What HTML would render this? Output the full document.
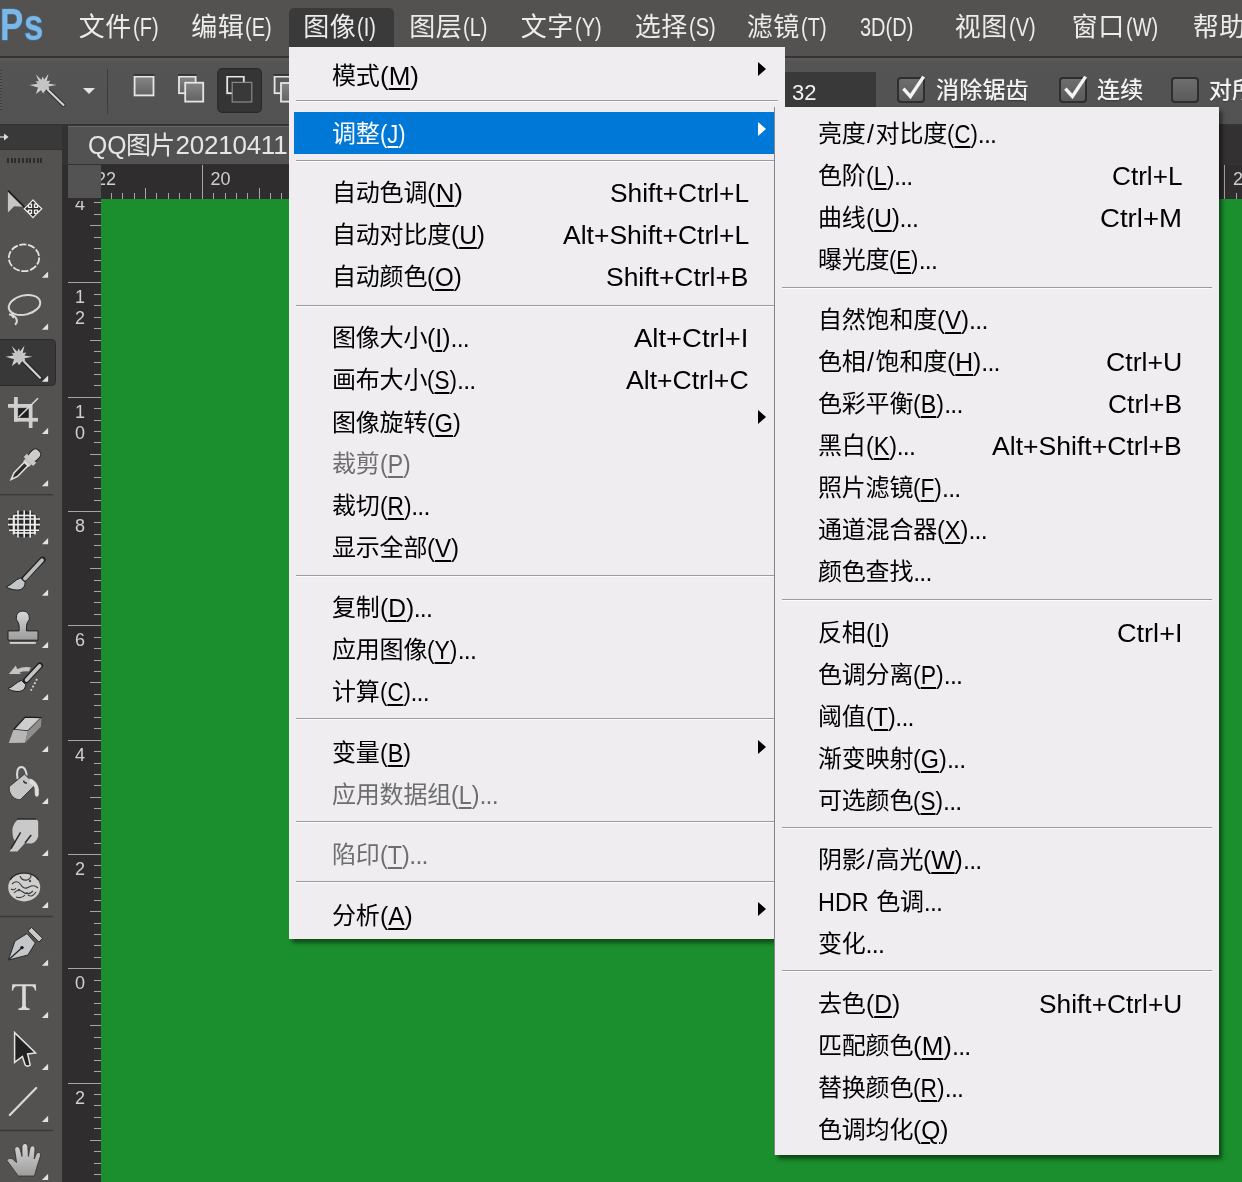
<!DOCTYPE html>
<html lang="zh-CN"><head><meta charset="utf-8"><title>Photoshop - 图像 调整 菜单</title>
<style>
html,body{margin:0;padding:0}
html{width:1242px;height:1182px;overflow:hidden}
body{width:1242px;height:1182px;overflow:hidden;position:relative;background:#535353;font-family:"Liberation Sans",sans-serif;}
.a{position:absolute}
.g{position:absolute;left:0;top:0;width:1242px;height:1182px;overflow:hidden;will-change:transform}
.t{position:absolute;white-space:nowrap;line-height:30px;height:30px}
.c{display:inline-block;vertical-align:top;overflow:visible}
.k{display:inline-block;vertical-align:top;overflow:visible;white-space:nowrap;font-family:"Liberation Sans","Noto Sans CJK SC",sans-serif}
.mb .k{letter-spacing:.6px}
.mi .k{letter-spacing:-.2px}
.l{display:inline-block;transform-origin:0 50%;vertical-align:top}
.u{text-decoration:underline;text-decoration-thickness:1.5px;text-underline-offset:3px}
.mb{color:#ececec;font-size:26px}
.mi{color:#000;font-size:24px}
.dis{color:#6d6d6d}
.fw{display:inline-block;white-space:nowrap;vertical-align:top;font-size:25px}
.el{font-size:25px;letter-spacing:-.8px}
.sl{font-size:25px;display:inline-block;width:10px;text-align:center}
.sep{position:absolute;height:1px;background:#9b9b9b;box-shadow:0 1px 0 #fbfbfb}
.tick{position:absolute;background:#a6a6a6}
.rn{position:absolute;color:#d0d0d0;font-size:18px;line-height:18px;height:18px;white-space:nowrap}
</style></head>
<body>
<!-- menu bar -->
<div class="a" style="left:0;top:0;width:1242px;height:56px;background:#535250"></div>
<div class="a" style="left:0;top:56px;width:1242px;height:2px;background:#343434"></div>
<!-- options bar -->
<div class="a" style="left:0;top:58px;width:1242px;height:66px;background:linear-gradient(#5c5c5c 0,#545454 4px,#525252 100%)"></div>
<div class="a" style="left:0;top:124px;width:1242px;height:2px;background:#343434"></div>
<!-- document area background -->
<div class="a" style="left:0;top:126px;width:1242px;height:1056px;background:#333131"></div>
<!-- tool panel -->
<div class="a" style="left:0;top:126px;width:62px;height:23px;background:#3a3939"></div>
<div class="a" style="left:0;top:150px;width:62px;height:1032px;background:#545251"></div>
<!-- document tab -->
<div class="a" style="left:68px;top:126px;width:700px;height:37px;background:#535252;border-top:1px solid #6a6a6a"></div>
<!-- rulers -->
<div class="a" style="left:62px;top:165px;width:1180px;height:34px;background:#2f2d2d"></div>
<div class="a" style="left:62px;top:165px;width:39px;height:1017px;background:#2f2d2d"></div>
<div class="a" style="left:68px;top:165px;width:33px;height:33px;background:#545353"></div>
<!-- canvas -->
<div class="a" style="left:101px;top:199px;width:1141px;height:983px;background:#1b8e2d"></div>
<div class="g">
<!-- horizontal ruler -->
<div class="tick" style="left:110.9px;top:193px;width:1px;height:6px"></div>
<div class="tick" style="left:122.3px;top:193px;width:1px;height:6px"></div>
<div class="tick" style="left:133.6px;top:193px;width:1px;height:6px"></div>
<div class="tick" style="left:145.0px;top:188px;width:1px;height:11px"></div>
<div class="tick" style="left:156.4px;top:193px;width:1px;height:6px"></div>
<div class="tick" style="left:167.7px;top:193px;width:1px;height:6px"></div>
<div class="tick" style="left:179.1px;top:193px;width:1px;height:6px"></div>
<div class="tick" style="left:190.4px;top:193px;width:1px;height:6px"></div>
<div class="tick" style="left:201.8px;top:165px;width:1px;height:34px"></div>
<div class="tick" style="left:213.2px;top:193px;width:1px;height:6px"></div>
<div class="tick" style="left:224.5px;top:193px;width:1px;height:6px"></div>
<div class="tick" style="left:235.9px;top:193px;width:1px;height:6px"></div>
<div class="tick" style="left:247.2px;top:193px;width:1px;height:6px"></div>
<div class="tick" style="left:258.6px;top:188px;width:1px;height:11px"></div>
<div class="tick" style="left:270.0px;top:193px;width:1px;height:6px"></div>
<div class="tick" style="left:281.3px;top:193px;width:1px;height:6px"></div>
<div class="tick" style="left:1224.2px;top:165px;width:1px;height:34px"></div>
<div class="tick" style="left:1235.6px;top:193px;width:1px;height:6px"></div>
<div class="rn" style="left:96px;top:170px;clip-path:inset(0 0 0 5px)">22</div>
<div class="rn" style="left:210.5px;top:170px">20</div>
<div class="rn" style="left:1233px;top:170px">2</div>
<!-- vertical ruler -->
<div class="tick" style="left:94px;top:202.4px;width:7px;height:1px"></div>
<div class="tick" style="left:94px;top:213.8px;width:7px;height:1px"></div>
<div class="tick" style="left:90px;top:225.2px;width:11px;height:1px"></div>
<div class="tick" style="left:94px;top:236.7px;width:7px;height:1px"></div>
<div class="tick" style="left:94px;top:248.1px;width:7px;height:1px"></div>
<div class="tick" style="left:94px;top:259.5px;width:7px;height:1px"></div>
<div class="tick" style="left:94px;top:271.0px;width:7px;height:1px"></div>
<div class="rn" style="left:74px;top:195.1px;width:12px;text-align:center;clip-path:inset(5.9px 0 0 0)">4</div>
<div class="tick" style="left:68px;top:282.4px;width:33px;height:1px"></div>
<div class="tick" style="left:94px;top:293.8px;width:7px;height:1px"></div>
<div class="tick" style="left:94px;top:305.3px;width:7px;height:1px"></div>
<div class="tick" style="left:94px;top:316.7px;width:7px;height:1px"></div>
<div class="tick" style="left:94px;top:328.1px;width:7px;height:1px"></div>
<div class="tick" style="left:90px;top:339.5px;width:11px;height:1px"></div>
<div class="tick" style="left:94px;top:351.0px;width:7px;height:1px"></div>
<div class="tick" style="left:94px;top:362.4px;width:7px;height:1px"></div>
<div class="tick" style="left:94px;top:373.8px;width:7px;height:1px"></div>
<div class="tick" style="left:94px;top:385.3px;width:7px;height:1px"></div>
<div class="rn" style="left:74px;top:288.4px;width:12px;text-align:center">1</div>
<div class="rn" style="left:74px;top:309.4px;width:12px;text-align:center">2</div>
<div class="tick" style="left:68px;top:396.7px;width:33px;height:1px"></div>
<div class="tick" style="left:94px;top:408.1px;width:7px;height:1px"></div>
<div class="tick" style="left:94px;top:419.6px;width:7px;height:1px"></div>
<div class="tick" style="left:94px;top:431.0px;width:7px;height:1px"></div>
<div class="tick" style="left:94px;top:442.4px;width:7px;height:1px"></div>
<div class="tick" style="left:90px;top:453.8px;width:11px;height:1px"></div>
<div class="tick" style="left:94px;top:465.3px;width:7px;height:1px"></div>
<div class="tick" style="left:94px;top:476.7px;width:7px;height:1px"></div>
<div class="tick" style="left:94px;top:488.1px;width:7px;height:1px"></div>
<div class="tick" style="left:94px;top:499.6px;width:7px;height:1px"></div>
<div class="rn" style="left:74px;top:402.7px;width:12px;text-align:center">1</div>
<div class="rn" style="left:74px;top:423.7px;width:12px;text-align:center">0</div>
<div class="tick" style="left:68px;top:511.0px;width:33px;height:1px"></div>
<div class="tick" style="left:94px;top:522.4px;width:7px;height:1px"></div>
<div class="tick" style="left:94px;top:533.9px;width:7px;height:1px"></div>
<div class="tick" style="left:94px;top:545.3px;width:7px;height:1px"></div>
<div class="tick" style="left:94px;top:556.7px;width:7px;height:1px"></div>
<div class="tick" style="left:90px;top:568.1px;width:11px;height:1px"></div>
<div class="tick" style="left:94px;top:579.6px;width:7px;height:1px"></div>
<div class="tick" style="left:94px;top:591.0px;width:7px;height:1px"></div>
<div class="tick" style="left:94px;top:602.4px;width:7px;height:1px"></div>
<div class="tick" style="left:94px;top:613.9px;width:7px;height:1px"></div>
<div class="rn" style="left:74px;top:517.0px;width:12px;text-align:center">8</div>
<div class="tick" style="left:68px;top:625.3px;width:33px;height:1px"></div>
<div class="tick" style="left:94px;top:636.7px;width:7px;height:1px"></div>
<div class="tick" style="left:94px;top:648.2px;width:7px;height:1px"></div>
<div class="tick" style="left:94px;top:659.6px;width:7px;height:1px"></div>
<div class="tick" style="left:94px;top:671.0px;width:7px;height:1px"></div>
<div class="tick" style="left:90px;top:682.4px;width:11px;height:1px"></div>
<div class="tick" style="left:94px;top:693.9px;width:7px;height:1px"></div>
<div class="tick" style="left:94px;top:705.3px;width:7px;height:1px"></div>
<div class="tick" style="left:94px;top:716.7px;width:7px;height:1px"></div>
<div class="tick" style="left:94px;top:728.2px;width:7px;height:1px"></div>
<div class="rn" style="left:74px;top:631.3px;width:12px;text-align:center">6</div>
<div class="tick" style="left:68px;top:739.6px;width:33px;height:1px"></div>
<div class="tick" style="left:94px;top:751.0px;width:7px;height:1px"></div>
<div class="tick" style="left:94px;top:762.5px;width:7px;height:1px"></div>
<div class="tick" style="left:94px;top:773.9px;width:7px;height:1px"></div>
<div class="tick" style="left:94px;top:785.3px;width:7px;height:1px"></div>
<div class="tick" style="left:90px;top:796.8px;width:11px;height:1px"></div>
<div class="tick" style="left:94px;top:808.2px;width:7px;height:1px"></div>
<div class="tick" style="left:94px;top:819.6px;width:7px;height:1px"></div>
<div class="tick" style="left:94px;top:831.0px;width:7px;height:1px"></div>
<div class="tick" style="left:94px;top:842.5px;width:7px;height:1px"></div>
<div class="rn" style="left:74px;top:745.6px;width:12px;text-align:center">4</div>
<div class="tick" style="left:68px;top:853.9px;width:33px;height:1px"></div>
<div class="tick" style="left:94px;top:865.3px;width:7px;height:1px"></div>
<div class="tick" style="left:94px;top:876.8px;width:7px;height:1px"></div>
<div class="tick" style="left:94px;top:888.2px;width:7px;height:1px"></div>
<div class="tick" style="left:94px;top:899.6px;width:7px;height:1px"></div>
<div class="tick" style="left:90px;top:911.0px;width:11px;height:1px"></div>
<div class="tick" style="left:94px;top:922.5px;width:7px;height:1px"></div>
<div class="tick" style="left:94px;top:933.9px;width:7px;height:1px"></div>
<div class="tick" style="left:94px;top:945.3px;width:7px;height:1px"></div>
<div class="tick" style="left:94px;top:956.8px;width:7px;height:1px"></div>
<div class="rn" style="left:74px;top:859.9px;width:12px;text-align:center">2</div>
<div class="tick" style="left:68px;top:968.2px;width:33px;height:1px"></div>
<div class="tick" style="left:94px;top:979.6px;width:7px;height:1px"></div>
<div class="tick" style="left:94px;top:991.1px;width:7px;height:1px"></div>
<div class="tick" style="left:94px;top:1002.5px;width:7px;height:1px"></div>
<div class="tick" style="left:94px;top:1013.9px;width:7px;height:1px"></div>
<div class="tick" style="left:90px;top:1025.4px;width:11px;height:1px"></div>
<div class="tick" style="left:94px;top:1036.8px;width:7px;height:1px"></div>
<div class="tick" style="left:94px;top:1048.2px;width:7px;height:1px"></div>
<div class="tick" style="left:94px;top:1059.6px;width:7px;height:1px"></div>
<div class="tick" style="left:94px;top:1071.1px;width:7px;height:1px"></div>
<div class="rn" style="left:74px;top:974.2px;width:12px;text-align:center">0</div>
<div class="tick" style="left:68px;top:1082.5px;width:33px;height:1px"></div>
<div class="tick" style="left:94px;top:1093.9px;width:7px;height:1px"></div>
<div class="tick" style="left:94px;top:1105.4px;width:7px;height:1px"></div>
<div class="tick" style="left:94px;top:1116.8px;width:7px;height:1px"></div>
<div class="tick" style="left:94px;top:1128.2px;width:7px;height:1px"></div>
<div class="tick" style="left:90px;top:1139.7px;width:11px;height:1px"></div>
<div class="tick" style="left:94px;top:1151.1px;width:7px;height:1px"></div>
<div class="tick" style="left:94px;top:1162.5px;width:7px;height:1px"></div>
<div class="tick" style="left:94px;top:1173.9px;width:7px;height:1px"></div>
<div class="rn" style="left:74px;top:1088.5px;width:12px;text-align:center">2</div>
<!-- menu bar items -->
<div class="a" style="left:289px;top:8px;width:105px;height:48px;background:#3b3a3a;border-radius:5px 5px 0 0"></div>
<svg class="a" style="left:0;top:0" width="60" height="56" viewBox="0 0 60 56"><text transform="translate(0 39.6) scale(.80 1)" font-family="Liberation Sans, sans-serif" font-weight="bold" font-size="43.5" fill="#7db7e6" stroke="#3f6f98" stroke-width="1.6" paint-order="stroke" letter-spacing="1">Ps</text></svg>
<div class="t mb" style="left:78.7px;top:12.0px;"><span class="k" style="width:53.2px">文件</span></div>
<div class="t mb" style="left:132.7px;top:12.0px;font-size:25px"><span class="l" style="transform:scaleX(.80)">(F)</span></div>
<div class="t mb" style="left:191.2px;top:12.0px;"><span class="k" style="width:53.2px">编辑</span></div>
<div class="t mb" style="left:245.2px;top:12.0px;font-size:25px"><span class="l" style="transform:scaleX(.80)">(E)</span></div>
<div class="t mb" style="left:303.2px;top:12.0px;"><span class="k" style="width:53.2px">图像</span></div>
<div class="t mb" style="left:357.2px;top:12.0px;font-size:25px"><span class="l" style="transform:scaleX(.80)">(I)</span></div>
<div class="t mb" style="left:409.2px;top:12.0px;"><span class="k" style="width:53.2px">图层</span></div>
<div class="t mb" style="left:463.2px;top:12.0px;font-size:25px"><span class="l" style="transform:scaleX(.80)">(L)</span></div>
<div class="t mb" style="left:520.7px;top:12.0px;"><span class="k" style="width:53.2px">文字</span></div>
<div class="t mb" style="left:574.7px;top:12.0px;font-size:25px"><span class="l" style="transform:scaleX(.80)">(Y)</span></div>
<div class="t mb" style="left:634.7px;top:12.0px;"><span class="k" style="width:53.2px">选择</span></div>
<div class="t mb" style="left:688.7px;top:12.0px;font-size:25px"><span class="l" style="transform:scaleX(.80)">(S)</span></div>
<div class="t mb" style="left:746.7px;top:12.0px;"><span class="k" style="width:53.2px">滤镜</span></div>
<div class="t mb" style="left:800.7px;top:12.0px;font-size:25px"><span class="l" style="transform:scaleX(.80)">(T)</span></div>
<div class="t mb" style="left:859.7px;top:12.0px;font-size:25px"><span class="l" style="transform:scaleX(.80)">3D(D)</span></div>
<div class="t mb" style="left:954.7px;top:12.0px;"><span class="k" style="width:53.2px">视图</span></div>
<div class="t mb" style="left:1008.7px;top:12.0px;font-size:25px"><span class="l" style="transform:scaleX(.80)">(V)</span></div>
<div class="t mb" style="left:1071.7px;top:12.0px;"><span class="k" style="width:53.2px">窗口</span></div>
<div class="t mb" style="left:1125.7px;top:12.0px;font-size:25px"><span class="l" style="transform:scaleX(.80)">(W)</span></div>
<div class="t mb" style="left:1192.7px;top:12.0px;"><span class="k" style="width:53.2px">帮助</span></div>
<div class="t mb" style="left:1246.7px;top:12.0px;font-size:25px"><span class="l" style="transform:scaleX(.80)">(H)</span></div>
<!-- options bar -->
<div class="a" style="left:0;top:70px;width:2px;height:40px;background:repeating-linear-gradient(#3a3a3a 0,#3a3a3a 1px,#5a5a5a 1px,#5a5a5a 3px)"></div>
<div class="a" style="left:107px;top:69px;width:1px;height:45px;background:#3c3c3c"></div>
<div class="a" style="left:83px;top:88px;width:0;height:0;border-left:6px solid transparent;border-right:6px solid transparent;border-top:6.5px solid #e4e4e4"></div>
<svg class="a" style="left:120px;top:60px" width="180" height="62" viewBox="120 60 180 62"><defs><linearGradient id="bg1" x1="0" y1="0" x2="0" y2="1"><stop offset="0" stop-color="#858585"/><stop offset="1" stop-color="#626262"/></linearGradient></defs><rect x="217.8" y="68.7" width="43.6" height="43.6" rx="4.5" fill="#363535" stroke="#2a2929" stroke-width="1.2"/><g stroke="#e6e6e6" stroke-width="1.8" fill="url(#bg1)"><rect x="134.6" y="76.6" width="18.9" height="18.8"/><rect x="179" y="76.6" width="16.6" height="16.6"/><rect x="185.2" y="82.7" width="18" height="18.9"/><rect x="227.2" y="76.6" width="16.6" height="16.6" fill="none"/><rect x="274.6" y="76.6" width="16.6" height="16.6" fill="#5a5a5a"/><rect x="281" y="83" width="18" height="18.6"/></g><rect x="232.2" y="82.4" width="19.6" height="19.6" fill="#3a3939" stroke="#8a8a8a" stroke-width="1.2"/><g stroke="#2b2a2a" stroke-width="1.3"><path d="M133.6 75h20.8M178 75h18.6M226.2 75h18.6M273.6 75h18.6"/></g></svg>
<div class="a" style="left:782px;top:72px;width:94px;height:40px;background:#3a3939"></div>
<div class="t " style="left:792.0px;top:77.5px;color:#f2f2f2;font-size:22px">32</div>
<div class="a" style="left:897px;top:77px;width:28px;height:26px;box-sizing:border-box;border:2px solid #2e2e2e;border-radius:4px;background:linear-gradient(#6e6e6e,#5a5a5a)"></div>
<svg class="a" style="left:896px;top:70px" width="36" height="34" viewBox="0 0 36 34"><path d="M7.4 18.6 L14.4 26.4 L27.6 6.6" fill="none" stroke="#f4f4f4" stroke-width="3.4" stroke-linejoin="miter"/></svg>
<div class="a" style="left:1059px;top:77px;width:28px;height:26px;box-sizing:border-box;border:2px solid #2e2e2e;border-radius:4px;background:linear-gradient(#6e6e6e,#5a5a5a)"></div>
<svg class="a" style="left:1058px;top:70px" width="36" height="34" viewBox="0 0 36 34"><path d="M7.4 18.6 L14.4 26.4 L27.6 6.6" fill="none" stroke="#f4f4f4" stroke-width="3.4" stroke-linejoin="miter"/></svg>
<div class="a" style="left:1171px;top:77px;width:28px;height:26px;box-sizing:border-box;border:2px solid #2e2e2e;border-radius:4px;background:linear-gradient(#6e6e6e,#5a5a5a)"></div>
<div class="t " style="left:936.0px;top:75.0px;color:#f4f4f4;font-size:23px;text-shadow:0 0 1px #fff,0 1px 1px #222"><span class="k" style="width:92.8px;letter-spacing:.2px">消除锯齿</span></div>
<div class="t " style="left:1097.0px;top:75.0px;color:#f4f4f4;font-size:23px;text-shadow:0 0 1px #fff,0 1px 1px #222"><span class="k" style="width:46.4px;letter-spacing:.2px">连续</span></div>
<div class="t " style="left:1209.0px;top:75.0px;color:#f4f4f4;font-size:23px;text-shadow:0 0 1px #fff,0 1px 1px #222"><span class="k" style="width:46.4px;letter-spacing:.2px">对所</span></div>
<!-- document tab -->
<div class="t " style="left:87.5px;top:130.0px;color:#e6e6e6;font-size:26px"><span class="fw" style="width:38.5px;font-size:26px"><span class="l" style="transform:scaleX(0.952);transform-origin:0 50%">QQ</span></span><span class="k" style="width:48.6px;font-size:25px;letter-spacing:-.7px">图片</span><span class="fw" style="font-size:26px;letter-spacing:-.25px;margin-left:1px">20210411</span></div>
<svg class="a" style="left:0;top:130px" width="20" height="14" viewBox="0 0 20 14"><path d="M0 7h4" stroke="#d8d8d8" stroke-width="1.3"/><path d="M4 3.4l4.6 3.6-4.6 3.6z" fill="#dcdcdc"/></svg>
<div class="a" style="left:7px;top:158px;width:37px;height:5px;background:repeating-linear-gradient(90deg,#2c2c2c 0,#2c2c2c 2px,transparent 2px,transparent 3.7px)"></div>
</div>
<!-- 图像 (Image) menu -->
<div class="a" style="left:289px;top:47px;width:496px;height:892px;background:#efedf0;box-shadow:3px 4px 4px rgba(0,0,0,.45);clip-path:inset(0 0 -12px 0)"></div>
<div class="a" style="left:294px;top:112px;width:482px;height:42px;background:#0078d7"></div>
<div class="sep" style="left:296px;top:100px;width:482px"></div>
<div class="sep" style="left:296px;top:160px;width:482px"></div>
<div class="sep" style="left:296px;top:305px;width:482px"></div>
<div class="sep" style="left:296px;top:575px;width:482px"></div>
<div class="sep" style="left:296px;top:718px;width:482px"></div>
<div class="sep" style="left:296px;top:821px;width:482px"></div>
<div class="sep" style="left:296px;top:881px;width:482px"></div>
<div class="g">
<div class="t mi" style="left:332.0px;top:60.5px;"><span class="k" style="width:47.6px">模式</span><span class="fw" style="width:38.9px"><span class="l" style="transform:scaleX(1.039);transform-origin:0 50%">(<span class="u">M</span>)</span></span></div>
<div class="a" style="left:758.0px;top:62.0px;width:0;height:0;border-top:7px solid transparent;border-bottom:7px solid transparent;border-left:8.5px solid #000"></div>
<div class="t mi" style="left:332.0px;top:118.5px;color:#fff;"><span class="k" style="width:47.6px">调整</span><span class="fw" style="width:25.6px"><span class="l" style="transform:scaleX(0.880);transform-origin:0 50%">(<span class="u">J</span>)</span></span></div>
<div class="a" style="left:758.0px;top:122.0px;width:0;height:0;border-top:7px solid transparent;border-bottom:7px solid transparent;border-left:8.5px solid #fff"></div>
<div class="t mi" style="left:332.0px;top:178.0px;"><span class="k" style="width:95.2px">自动色调</span><span class="fw" style="width:36.0px"><span class="l" style="transform:scaleX(1.037);transform-origin:0 50%">(<span class="u">N</span>)</span></span></div>
<div class="t mi" style="left:609.7px;top:178.0px;"><span class="fw" style="width:139.1px"><span class="l" style="transform:scaleX(1.054);transform-origin:0 50%">Shift+Ctrl+L</span></span></div>
<div class="t mi" style="left:332.0px;top:220.0px;"><span class="k" style="width:119.0px">自动对比度</span><span class="fw" style="width:34.0px"><span class="l" style="transform:scaleX(0.980);transform-origin:0 50%">(<span class="u">U</span>)</span></span></div>
<div class="t mi" style="left:562.5px;top:220.0px;"><span class="fw" style="width:186.3px"><span class="l" style="transform:scaleX(1.060);transform-origin:0 50%">Alt+Shift+Ctrl+L</span></span></div>
<div class="t mi" style="left:332.0px;top:262.0px;"><span class="k" style="width:95.2px">自动颜色</span><span class="fw" style="width:34.8px"><span class="l" style="transform:scaleX(0.964);transform-origin:0 50%">(<span class="u">O</span>)</span></span></div>
<div class="t mi" style="left:606.4px;top:262.0px;"><span class="fw" style="width:142.4px"><span class="l" style="transform:scaleX(1.057);transform-origin:0 50%">Shift+Ctrl+B</span></span></div>
<div class="t mi" style="left:332.0px;top:323.0px;"><span class="k" style="width:95.2px">图像大小</span><span class="fw" style="width:23.4px"><span class="l" style="transform:scaleX(0.992);transform-origin:0 50%">(<span class="u">I</span>)</span></span><span class="el">...</span></div>
<div class="t mi" style="left:634.4px;top:323.0px;"><span class="fw" style="width:114.4px"><span class="l" style="transform:scaleX(1.098);transform-origin:0 50%">Alt+Ctrl+I</span></span></div>
<div class="t mi" style="left:332.0px;top:365.0px;"><span class="k" style="width:95.2px">画布大小</span><span class="fw" style="width:29.9px"><span class="l" style="transform:scaleX(0.898);transform-origin:0 50%">(<span class="u">S</span>)</span></span><span class="el">...</span></div>
<div class="t mi" style="left:626.2px;top:365.0px;"><span class="fw" style="width:122.6px"><span class="l" style="transform:scaleX(1.063);transform-origin:0 50%">Alt+Ctrl+C</span></span></div>
<div class="t mi" style="left:332.0px;top:407.5px;"><span class="k" style="width:95.2px">图像旋转</span><span class="fw" style="width:33.7px"><span class="l" style="transform:scaleX(0.935);transform-origin:0 50%">(<span class="u">G</span>)</span></span></div>
<div class="a" style="left:758.0px;top:410.0px;width:0;height:0;border-top:7px solid transparent;border-bottom:7px solid transparent;border-left:8.5px solid #000"></div>
<div class="t mi dis" style="left:332.0px;top:449.0px;"><span class="k" style="width:47.6px">裁剪</span><span class="fw" style="width:30.6px"><span class="l" style="transform:scaleX(0.919);transform-origin:0 50%">(<span class="u">P</span>)</span></span></div>
<div class="t mi" style="left:332.0px;top:491.0px;"><span class="k" style="width:47.6px">裁切</span><span class="fw" style="width:31.6px"><span class="l" style="transform:scaleX(0.910);transform-origin:0 50%">(<span class="u">R</span>)</span></span><span class="el">...</span></div>
<div class="t mi" style="left:332.0px;top:533.0px;"><span class="k" style="width:95.2px">显示全部</span><span class="fw" style="width:32.1px"><span class="l" style="transform:scaleX(0.964);transform-origin:0 50%">(<span class="u">V</span>)</span></span></div>
<div class="t mi" style="left:332.0px;top:593.0px;"><span class="k" style="width:47.6px">复制</span><span class="fw" style="width:34.1px"><span class="l" style="transform:scaleX(0.983);transform-origin:0 50%">(<span class="u">D</span>)</span></span><span class="el">...</span></div>
<div class="t mi" style="left:332.0px;top:635.0px;"><span class="k" style="width:95.2px">应用图像</span><span class="fw" style="width:30.5px"><span class="l" style="transform:scaleX(0.914);transform-origin:0 50%">(<span class="u">Y</span>)</span></span><span class="el">...</span></div>
<div class="t mi" style="left:332.0px;top:677.0px;"><span class="k" style="width:47.6px">计算</span><span class="fw" style="width:30.8px"><span class="l" style="transform:scaleX(0.887);transform-origin:0 50%">(<span class="u">C</span>)</span></span><span class="el">...</span></div>
<div class="t mi" style="left:332.0px;top:738.0px;"><span class="k" style="width:47.6px">变量</span><span class="fw" style="width:31.0px"><span class="l" style="transform:scaleX(0.929);transform-origin:0 50%">(<span class="u">B</span>)</span></span></div>
<div class="a" style="left:758.0px;top:740.0px;width:0;height:0;border-top:7px solid transparent;border-bottom:7px solid transparent;border-left:8.5px solid #000"></div>
<div class="t mi dis" style="left:332.0px;top:779.5px;"><span class="k" style="width:119.0px">应用数据组</span><span class="fw" style="width:28.4px"><span class="l" style="transform:scaleX(0.930);transform-origin:0 50%">(<span class="u">L</span>)</span></span><span class="el">...</span></div>
<div class="t mi dis" style="left:332.0px;top:839.5px;"><span class="k" style="width:47.6px">陷印</span><span class="fw" style="width:29.7px"><span class="l" style="transform:scaleX(0.932);transform-origin:0 50%">(<span class="u">T</span>)</span></span><span class="el">...</span></div>
<div class="t mi" style="left:332.0px;top:900.5px;"><span class="k" style="width:47.6px">分析</span><span class="fw" style="width:32.7px"><span class="l" style="transform:scaleX(0.982);transform-origin:0 50%">(<span class="u">A</span>)</span></span></div>
<div class="a" style="left:758.0px;top:902.0px;width:0;height:0;border-top:7px solid transparent;border-bottom:7px solid transparent;border-left:8.5px solid #000"></div>
</div>
<!-- 调整 (Adjustments) submenu -->
<div class="a" style="left:775px;top:107px;width:444px;height:1048px;background:#efedf0;box-shadow:3px 4px 4px rgba(0,0,0,.5),-1px 0 0 #8a8a8a"></div>
<div class="sep" style="left:782px;top:287px;width:430px"></div>
<div class="sep" style="left:782px;top:599px;width:430px"></div>
<div class="sep" style="left:782px;top:827px;width:430px"></div>
<div class="sep" style="left:782px;top:970px;width:430px"></div>
<div class="g">
<div class="t mi" style="left:818.0px;top:119.0px;"><span class="k" style="width:47.6px">亮度</span><span class="sl">/</span><span class="k" style="width:71.4px">对比度</span><span class="fw" style="width:30.8px"><span class="l" style="transform:scaleX(0.887);transform-origin:0 50%">(<span class="u">C</span>)</span></span><span class="el">...</span></div>
<div class="t mi" style="left:818.0px;top:161.0px;"><span class="k" style="width:47.6px">色阶</span><span class="fw" style="width:28.4px"><span class="l" style="transform:scaleX(0.930);transform-origin:0 50%">(<span class="u">L</span>)</span></span><span class="el">...</span></div>
<div class="t mi" style="left:1111.5px;top:161.0px;"><span class="fw" style="width:70.5px"><span class="l" style="transform:scaleX(1.046);transform-origin:0 50%">Ctrl+L</span></span></div>
<div class="t mi" style="left:818.0px;top:203.0px;"><span class="k" style="width:47.6px">曲线</span><span class="fw" style="width:34.0px"><span class="l" style="transform:scaleX(0.980);transform-origin:0 50%">(<span class="u">U</span>)</span></span><span class="el">...</span></div>
<div class="t mi" style="left:1100.0px;top:203.0px;"><span class="fw" style="width:82.0px"><span class="l" style="transform:scaleX(1.104);transform-origin:0 50%">Ctrl+M</span></span></div>
<div class="t mi" style="left:818.0px;top:245.0px;"><span class="k" style="width:71.4px">曝光度</span><span class="fw" style="width:29.3px"><span class="l" style="transform:scaleX(0.879);transform-origin:0 50%">(<span class="u">E</span>)</span></span><span class="el">...</span></div>
<div class="t mi" style="left:818.0px;top:304.5px;"><span class="k" style="width:119.0px">自然饱和度</span><span class="fw" style="width:32.1px"><span class="l" style="transform:scaleX(0.964);transform-origin:0 50%">(<span class="u">V</span>)</span></span><span class="el">...</span></div>
<div class="t mi" style="left:818.0px;top:346.5px;"><span class="k" style="width:47.6px">色相</span><span class="sl">/</span><span class="k" style="width:71.4px">饱和度</span><span class="fw" style="width:34.3px"><span class="l" style="transform:scaleX(0.989);transform-origin:0 50%">(<span class="u">H</span>)</span></span><span class="el">...</span></div>
<div class="t mi" style="left:1105.7px;top:346.5px;"><span class="fw" style="width:76.3px"><span class="l" style="transform:scaleX(1.067);transform-origin:0 50%">Ctrl+U</span></span></div>
<div class="t mi" style="left:818.0px;top:388.5px;"><span class="k" style="width:95.2px">色彩平衡</span><span class="fw" style="width:31.0px"><span class="l" style="transform:scaleX(0.929);transform-origin:0 50%">(<span class="u">B</span>)</span></span><span class="el">...</span></div>
<div class="t mi" style="left:1107.9px;top:388.5px;"><span class="fw" style="width:74.1px"><span class="l" style="transform:scaleX(1.056);transform-origin:0 50%">Ctrl+B</span></span></div>
<div class="t mi" style="left:818.0px;top:430.5px;"><span class="k" style="width:47.6px">黑白</span><span class="fw" style="width:31.1px"><span class="l" style="transform:scaleX(0.934);transform-origin:0 50%">(<span class="u">K</span>)</span></span><span class="el">...</span></div>
<div class="t mi" style="left:992.2px;top:430.5px;"><span class="fw" style="width:189.8px"><span class="l" style="transform:scaleX(1.063);transform-origin:0 50%">Alt+Shift+Ctrl+B</span></span></div>
<div class="t mi" style="left:818.0px;top:472.5px;"><span class="k" style="width:95.2px">照片滤镜</span><span class="fw" style="width:28.9px"><span class="l" style="transform:scaleX(0.904);transform-origin:0 50%">(<span class="u">F</span>)</span></span><span class="el">...</span></div>
<div class="t mi" style="left:818.0px;top:514.5px;"><span class="k" style="width:119.0px">通道混合器</span><span class="fw" style="width:31.4px"><span class="l" style="transform:scaleX(0.941);transform-origin:0 50%">(<span class="u">X</span>)</span></span><span class="el">...</span></div>
<div class="t mi" style="left:818.0px;top:556.5px;"><span class="k" style="width:95.2px">颜色查找</span><span class="el">...</span></div>
<div class="t mi" style="left:818.0px;top:617.5px;"><span class="k" style="width:47.6px">反相</span><span class="fw" style="width:23.4px"><span class="l" style="transform:scaleX(0.992);transform-origin:0 50%">(<span class="u">I</span>)</span></span></div>
<div class="t mi" style="left:1116.5px;top:617.5px;"><span class="fw" style="width:65.5px"><span class="l" style="transform:scaleX(1.084);transform-origin:0 50%">Ctrl+I</span></span></div>
<div class="t mi" style="left:818.0px;top:659.5px;"><span class="k" style="width:95.2px">色调分离</span><span class="fw" style="width:30.6px"><span class="l" style="transform:scaleX(0.919);transform-origin:0 50%">(<span class="u">P</span>)</span></span><span class="el">...</span></div>
<div class="t mi" style="left:818.0px;top:701.5px;"><span class="k" style="width:47.6px">阈值</span><span class="fw" style="width:29.7px"><span class="l" style="transform:scaleX(0.932);transform-origin:0 50%">(<span class="u">T</span>)</span></span><span class="el">...</span></div>
<div class="t mi" style="left:818.0px;top:743.5px;"><span class="k" style="width:95.2px">渐变映射</span><span class="fw" style="width:33.7px"><span class="l" style="transform:scaleX(0.935);transform-origin:0 50%">(<span class="u">G</span>)</span></span><span class="el">...</span></div>
<div class="t mi" style="left:818.0px;top:785.5px;"><span class="k" style="width:95.2px">可选颜色</span><span class="fw" style="width:29.9px"><span class="l" style="transform:scaleX(0.898);transform-origin:0 50%">(<span class="u">S</span>)</span></span><span class="el">...</span></div>
<div class="t mi" style="left:818.0px;top:844.5px;"><span class="k" style="width:47.6px">阴影</span><span class="sl">/</span><span class="k" style="width:47.6px">高光</span><span class="fw" style="width:39.8px"><span class="l" style="transform:scaleX(0.990);transform-origin:0 50%">(<span class="u">W</span>)</span></span><span class="el">...</span></div>
<div class="t mi" style="left:818.0px;top:886.5px;"><span class="fw" style="width:50.7px"><span class="l" style="transform:scaleX(0.936);transform-origin:0 50%">HDR</span></span><span class="fw" style="width:7.5px">&nbsp;</span><span class="k" style="width:47.6px">色调</span><span class="el">...</span></div>
<div class="t mi" style="left:818.0px;top:928.5px;"><span class="k" style="width:47.6px">变化</span><span class="el">...</span></div>
<div class="t mi" style="left:818.0px;top:989.0px;"><span class="k" style="width:47.6px">去色</span><span class="fw" style="width:34.1px"><span class="l" style="transform:scaleX(0.983);transform-origin:0 50%">(<span class="u">D</span>)</span></span></div>
<div class="t mi" style="left:1038.8px;top:989.0px;"><span class="fw" style="width:143.2px"><span class="l" style="transform:scaleX(1.052);transform-origin:0 50%">Shift+Ctrl+U</span></span></div>
<div class="t mi" style="left:818.0px;top:1031.0px;"><span class="k" style="width:95.2px">匹配颜色</span><span class="fw" style="width:38.9px"><span class="l" style="transform:scaleX(1.039);transform-origin:0 50%">(<span class="u">M</span>)</span></span><span class="el">...</span></div>
<div class="t mi" style="left:818.0px;top:1073.0px;"><span class="k" style="width:95.2px">替换颜色</span><span class="fw" style="width:31.6px"><span class="l" style="transform:scaleX(0.910);transform-origin:0 50%">(<span class="u">R</span>)</span></span><span class="el">...</span></div>
<div class="t mi" style="left:818.0px;top:1115.0px;"><span class="k" style="width:95.2px">色调均化</span><span class="fw" style="width:35.4px"><span class="l" style="transform:scaleX(0.981);transform-origin:0 50%">(<span class="u">Q</span>)</span></span></div>
</div>
<!-- tool panel icons -->
<svg class="a" style="left:0;top:0" width="64" height="1182" viewBox="0 0 64 1182">
<defs><linearGradient id="gv" x1="0" y1="0" x2="0" y2="1"><stop offset="0" stop-color="#d6d6d6"/><stop offset="1" stop-color="#9c9c9c"/></linearGradient></defs>
<path d="M7.9 191 V212.4 L14.2 206.3 L23.6 206.7 Z" fill="#c6c6c6"/>
<path d="M8 190.6 L25 207.6" stroke="#1c1c1c" stroke-width="1.7" fill="none"/>
<g transform="translate(33 208.8)"><path d="M0 -8.8 L4 -4.6 H1.4 V-1.4 H4.6 V-4 L8.8 0 L4.6 4 V1.4 H1.4 V4.6 H4 L0 8.8 L-4 4.6 H-1.4 V1.4 H-4.6 V4 L-8.8 0 L-4.6 -4 V-1.4 H-1.4 V-4.6 H-4 Z" fill="#262626" stroke="#f0f0f0" stroke-width="1.2" stroke-linejoin="miter"/></g>
<ellipse cx="24" cy="257.8" rx="15.2" ry="13.4" fill="none" stroke="#e4e4e4" stroke-width="1.8" stroke-dasharray="7.2 1.7"/>
<path d="M41.9 277.8 h6.2 v-6.2 z" fill="#e2e2e2"/>
<g fill="none" stroke="#d8d8d8" stroke-width="2"><ellipse cx="24.5" cy="305" rx="16" ry="9.6" transform="rotate(-13 24.5 305)"/><path d="M9 314.5 q4.5 0 7 3.5 q2.2 4.2 -1 6.6 M12.5 312.6 q-1.5 3.4 1.6 5"/></g>
<path d="M41.9 329.8 h6.2 v-6.2 z" fill="#e2e2e2"/>
<rect x="-5" y="339.5" width="60.5" height="46" rx="4" fill="#393838" stroke="#2b2b2b" stroke-width="1"/>
<path d="M24 361.5 L40 377.8" stroke="#1e1e1e" stroke-width="4" stroke-linecap="round"/>
<path d="M24 361.5 L40 377.8" stroke="#d0d0d0" stroke-width="2.3" stroke-linecap="round"/>
<polygon points="32.5,356.8 24.2,358.2 25.5,360.6 21.7,361.5 19.0,365.3 17.2,361.9 11.9,365.9 14.1,359.2 5.5,356.8 13.8,355.5 11.5,352.8 15.0,353.2 11.7,346.0 17.3,351.7 18.7,348.3 20.1,351.5 24.5,345.6 22.7,352.9 26.4,352.6 24.2,355.4" fill="#cfcfcf"/>
<circle cx="19" cy="356.8" r="5.6" fill="#c4c4c4"/>
<path d="M41.9 381.8 h6.2 v-6.2 z" fill="#e2e2e2"/>
<g fill="#cfcfcf"><rect x="14" y="397" width="3.8" height="24.6"/><rect x="8" y="404" width="23" height="3.8"/><rect x="28.8" y="404" width="3.7" height="24"/><rect x="14" y="417.9" width="24" height="3.7"/></g>
<rect x="18.2" y="408.2" width="10.2" height="9.4" fill="#1f1f1f"/><path d="M18.6 417.2 L38 398.2" stroke="#d8d8d8" stroke-width="1.6"/>
<path d="M41.9 433.9 h6.2 v-6.2 z" fill="#e2e2e2"/>
<g transform="rotate(44 24 466)"><rect x="19" y="444.6" width="10.2" height="12.4" rx="4.6" fill="#cdcdcd" stroke="#1e1e1e" stroke-width="1"/><rect x="17.6" y="455.2" width="13" height="4.6" fill="#c9c9c9"/><rect x="20" y="459.6" width="8.2" height="3.6" fill="#c9c9c9"/><path d="M21.6 463 V478 L24.1 484.6 L26.6 478 V463 Z" fill="#2c2c2c" stroke="#e6e6e6" stroke-width="1.5"/></g>
<path d="M41.9 486.2 h6.2 v-6.2 z" fill="#e2e2e2"/>
<rect x="0" y="494" width="53.5" height="1.4" fill="#3a3a3a"/>
<ellipse cx="24.2" cy="524" rx="15.5" ry="13" fill="#2a2a2a"/>
<g stroke="#ededed" stroke-width="1.6" fill="none"><path d="M8 519h32M8 524.6h32M9 530.2h30M13.5 515.5v19M18 510.5v27M24.2 510.5v27M30.2 510.5v27M35 515.5v19"/><rect x="14" y="515.5" width="20.6" height="17.5"/></g>
<path d="M41.9 544.2 h6.2 v-6.2 z" fill="#e2e2e2"/>
<path d="M42.6 559.6 L24 579" stroke="#1e1e1e" stroke-width="6" stroke-linecap="round"/>
<path d="M42 560.2 L25 578.6" stroke="#b9bdc0" stroke-width="3.8" stroke-linecap="round"/>
<path d="M6 586.8 C12 585.2 15 579.2 20.6 578 L25.2 582.4 C24.6 589 20.5 590.6 14.5 589.8 C11 589.3 8.4 588.4 6 586.8 Z" fill="#c3c6c8" stroke="#1e1e1e" stroke-width="1"/>
<path d="M41.9 595.8 h6.2 v-6.2 z" fill="#e2e2e2"/>
<path d="M22.8 611.1 a6.6 6.6 0 0 1 4.6 11.4 q-1.2 1.6 -1 8.4 H38 V640.2 H8 V630.9 H19.2 q.2 -6.8 -1 -8.4 A6.6 6.6 0 0 1 22.8 611.1 Z" fill="url(#gv)" stroke="#222" stroke-width="1"/>
<rect x="9.8" y="642" width="26" height="1.9" fill="#cfcfcf"/>
<path d="M41.9 648.0 h6.2 v-6.2 z" fill="#e2e2e2"/>
<path d="M40 665.4 L26 680.4" stroke="#1e1e1e" stroke-width="6" stroke-linecap="round"/>
<path d="M39.6 666 L26.6 680" stroke="#c2c4c6" stroke-width="3.8" stroke-linecap="round"/>
<path d="M8 688.4 C13 687.2 16 682 21.4 680.4 L25.8 684.6 C25.2 690 21.5 692 16 691.4 C12.5 691 10 690 8 688.4 Z" fill="#c9cacb" stroke="#1e1e1e" stroke-width="1"/>
<path d="M8.8 674 L15.8 665.6 L17.2 669 Q25 665.8 31 667.6 L28.6 671.4 Q24 670.6 19.4 672.6 L21 674 Z" fill="#c4c4c4"/>
<path d="M37 679 L30.6 691.2" stroke="#d8d8d8" stroke-width="1.8" stroke-dasharray="1.8 2"/>
<path d="M41.9 700.1 h6.2 v-6.2 z" fill="#e2e2e2"/>
<path d="M13.5 729.7 L25.1 717.1 L41.4 717.6 L27.9 731 Z" fill="#cdcdcd" stroke="#1c1c1c" stroke-width="1.3" stroke-linejoin="round"/>
<path d="M13.5 729.7 L27.9 731 L25.1 742.7 L8.8 743.1 Z" fill="#b7b7b7"/>
<path d="M27.9 731 L41.4 717.6 L41 726.4 L25.1 742.7 Z" fill="#8e8e8e"/>
<path d="M41.9 752.0 h6.2 v-6.2 z" fill="#e2e2e2"/>
<path d="M17.6 779 C16 771.5 18 767 21.2 767 C24.5 767 26.2 771 26.8 775.5" fill="none" stroke="#dadada" stroke-width="2"/>
<path d="M9.4 786.5 L24.4 774.2 L35.6 784.6 L20.4 799.6 C14.5 800.6 8 793.5 9.4 786.5 Z" fill="#c6c6c6" stroke="#2a2a2a" stroke-width=".8"/>
<path d="M29.5 778.6 C34 779.5 38.6 784 38.8 790 L38.8 794.5 Q38.2 797.2 36.2 796.6 Q34.6 796 34.8 792.5 L34.6 788 Q33.6 784.6 29.6 783.4 Z" fill="#dcdcdc"/>
<path d="M23.6 780.6 q.6 3 3.2 2.2" fill="none" stroke="#2a2a2a" stroke-width="1.5"/>
<path d="M41.9 804.0 h6.2 v-6.2 z" fill="#e2e2e2"/>
<path d="M12.4 829.6 Q12.6 824.2 17.8 819.4 H35.6 Q38.2 819.6 38.2 822 V836.6 Q36.4 842.6 31.4 843.6 L24.8 843.2 L17.4 851.4 H9.6 L15.6 842 Q12 838 12.4 829.6 Z" fill="#c9c9c9"/>
<path d="M20.6 832.4 L11 848.6 M31.2 835 L25 843" stroke="#2a2a2a" stroke-width="1.5" fill="none"/>
<path d="M17 819 H36" stroke="#1f1f1f" stroke-width="1.2"/>
<path d="M41.9 856.0 h6.2 v-6.2 z" fill="#e2e2e2"/>
<ellipse cx="24.2" cy="887.4" rx="16" ry="14" fill="#cfcfcf"/>
<g fill="none" stroke="#3a3a3a" stroke-width="1.1"><path d="M12 884 q5 -5 9 1 q3 5 8 2 q5 -3 9 1M14 893 q4 -5 9 -1 q5 4 10 -1M20 876 q2 5 7 4 q4 -1 4 -5M16 897 q6 2 9 -2M28 895 q4 3 8 -3M11 889 q3 2 5 -1"/></g>
<g fill="#4a4a4a"><circle cx="19" cy="890" r="1.3"/><circle cx="30" cy="881" r="1.2"/><circle cx="27" cy="893" r="1.1"/></g>
<path d="M10 880 Q15 872 27 873.2 Q35 874 38.5 880" fill="none" stroke="#222" stroke-width="1.1"/>
<path d="M41.9 908.0 h6.2 v-6.2 z" fill="#e2e2e2"/>
<rect x="0" y="915.8" width="53.5" height="1.4" fill="#3a3a3a"/>
<path d="M8.4 960 L15 941 L27 933.6 L35.3 943 L27.9 955 Z" fill="#c4c7c9" stroke="#202020" stroke-width=".9"/>
<path d="M27.9 930.8 L31.6 927.4 L42.5 938.3 L39 942.1 Z" fill="#c9c9c9" stroke="#202020" stroke-width=".9"/>
<path d="M9.2 959.2 L21.6 948" stroke="#202020" stroke-width="1.2"/><circle cx="22" cy="947.6" r="1.7" fill="#151515"/>
<path d="M41.9 965.8 h6.2 v-6.2 z" fill="#e2e2e2"/>
<path d="M12.2 984.2 H35.8 L36.2 990.6 H35 Q34.4 986.4 31 986.2 H25.8 V1005.6 Q25.9 1008.4 29.6 1008.6 V1009.9 H18.4 V1008.6 Q22.1 1008.4 22.2 1005.6 V986.2 H17 Q13.6 986.4 13 990.6 H11.8 Z" fill="#d9d9d9"/>
<path d="M41.9 1017.9 h6.2 v-6.2 z" fill="#e2e2e2"/>
<path d="M14.6 1032.6 V1062.4 L22.4 1056.4 L25.2 1065 Q27.6 1067.2 30.2 1065 L27.6 1054 L35.6 1053 Z" fill="#222" stroke="#e2e2e2" stroke-width="1.5" stroke-linejoin="miter"/>
<path d="M41.9 1070.0 h6.2 v-6.2 z" fill="#e2e2e2"/>
<path d="M9.8 1115 L36.2 1088" stroke="#d9d9d9" stroke-width="2.2" stroke-linecap="round"/>
<path d="M41.9 1122.0 h6.2 v-6.2 z" fill="#e2e2e2"/>
<rect x="0" y="1129.8" width="53" height="1.4" fill="#3a3a3a"/>
<path d="M18.2 1176 L7 1160.5 Q8.6 1157 12.2 1158.8 L16.6 1162.6 L14.6 1149 Q15 1146.4 17.4 1146.6 Q19.4 1146.8 20 1149 L22 1156.5 L22 1146.6 Q22.4 1143.4 25 1143.4 Q27.4 1143.4 27.8 1146.6 L28.4 1156.5 L30 1148 Q30.8 1145.4 33 1145.8 Q35.2 1146.2 35 1149 L34.2 1159 L36.4 1154 Q37.6 1151.8 39.4 1152.6 Q40.8 1153.4 40.4 1156 L36.6 1168 L34.4 1176 Z" fill="url(#gv)" stroke="#2a2a2a" stroke-width=".7"/>
<path d="M41.9 1180.0 h6.2 v-6.2 z" fill="#e2e2e2"/>
</svg>
<svg class="a" style="left:24px;top:66px" width="48" height="46" viewBox="24 66 48 46">
<path d="M48 90 L63.5 105" stroke="#2a2a2a" stroke-width="4" stroke-linecap="round"/>
<path d="M48 90 L63.5 105" stroke="#d0d0d0" stroke-width="2.3" stroke-linecap="round"/>
<polygon points="56.5,85.0 48.2,86.4 49.5,88.8 45.7,89.7 43.0,93.5 41.2,90.1 35.9,94.1 38.1,87.4 29.5,85.0 37.8,83.7 35.5,81.0 39.0,81.4 35.7,74.2 41.3,79.9 42.7,76.5 44.1,79.7 48.5,73.8 46.7,81.1 50.4,80.8 48.2,83.6" fill="#cfcfcf"/>
<circle cx="43" cy="85" r="5.6" fill="#c4c4c4"/>
</svg>
</body></html>
